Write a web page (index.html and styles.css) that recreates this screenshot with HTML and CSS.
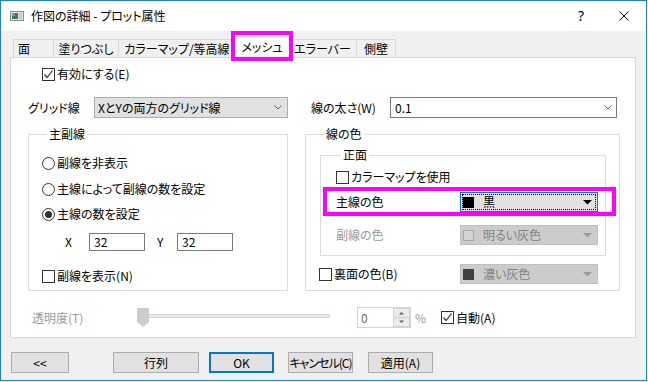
FILE: index.html
```html
<!DOCTYPE html>
<html lang="ja">
<head>
  <meta charset="UTF-8" />
  <meta name="viewport" content="width=device-width, initial-scale=1.0"/>
  <title>作図の詳細 - プロット属性</title>
  <link rel="stylesheet" href="styles.css">
</head>
<body>

<div class="window">
  <div class="titlebar">
    <svg class="app-icon" width="14" height="10" viewBox="0 0 14 10">
      <rect x="0.5" y="0.5" width="13" height="9" fill="#e6e6e6" stroke="#8c8c8c"/>
      <rect x="2" y="2" width="6" height="6" fill="#3b7a68"/>
      <rect x="2" y="2" width="3" height="3" fill="#5f9fb0"/>
      <rect x="9" y="2" width="3" height="6" fill="#c9c9c9"/>
    </svg>
    <span class="title">作図の詳細 - プロット属性</span>
    <span class="help">?</span>
    <svg class="close" width="10" height="10" viewBox="0 0 10 10">
      <path d="M0.5 0.5 L9.5 9.5 M9.5 0.5 L0.5 9.5" stroke="#000" stroke-width="1" fill="none"/>
    </svg>
  </div>

  <div class="dialog">
    <div class="tabs">
      <div class="tab tab-face">面</div>
      <div class="tab tab-fill">塗りつぶし</div>
      <div class="tab tab-cmap">カラーマップ/等高線</div>
      <div class="tab tab-mesh active">メッシュ</div>
      <div class="tab tab-err">エラーバー</div>
      <div class="tab tab-wall">側壁</div>
    </div>

    <div class="panel">
      <div class="opt enable-row">
        <span class="box"><svg width="11" height="11" viewBox="0 0 11 11"><path d="M1.5 5.5 L4 8.5 L9.5 1.5" stroke="#333" stroke-width="1.2" fill="none"/></svg></span>
        有効にする(E)
      </div>

      <div class="cols">
        <div class="field">
          <span class="grid-label">グリッド線</span>
          <div class="combo grid-combo">
            XとYの両方のグリッド線
            <svg width="8" height="5" viewBox="0 0 8 5"><path d="M0.5 0.5 L4 4 L7.5 0.5" stroke="#606060" fill="none"/></svg>
          </div>
        </div>
        <div class="field">
          <span class="width-label">線の太さ(W)</span>
          <div class="combo edit width-combo">
            0.1
            <svg width="8" height="5" viewBox="0 0 8 5"><path d="M0.5 0.5 L4 4 L7.5 0.5" stroke="#606060" fill="none"/></svg>
          </div>
        </div>

        <fieldset class="group major">
          <legend>主副線</legend>
          <div class="opt r1"><span class="radio"></span>副線を非表示</div>
          <div class="opt r2"><span class="radio"></span>主線によって副線の数を設定</div>
          <div class="opt r3"><span class="radio on"></span>主線の数を設定</div>
          <div class="xy">
            <span class="xy-label">X</span>
            <span class="num">32</span>
            <span class="xy-label y">Y</span>
            <span class="num">32</span>
          </div>
          <div class="opt show-minor"><span class="box"></span>副線を表示(N)</div>
        </fieldset>

        <fieldset class="group color">
          <legend>線の色</legend>
          <fieldset class="group front">
            <legend>正面</legend>
            <div class="opt cmap-row"><span class="box"></span>カラーマップを使用</div>
            <div class="line-row main-row">
              <span>主線の色</span>
              <div class="swatch-combo focused">
                <span class="swatch black"></span>黒
                <svg width="9" height="5" viewBox="0 0 9 5"><polygon points="0,0 9,0 4.5,4.5" fill="#000"/></svg>
              </div>
            </div>
            <div class="line-row minor-row">
              <span>副線の色</span>
              <div class="swatch-combo disabled">
                <span class="swatch light"></span>明るい灰色
                <svg width="9" height="5" viewBox="0 0 9 5"><polygon points="0,0 9,0 4.5,4.5" fill="#9a9a9a"/></svg>
              </div>
            </div>
          </fieldset>
          <div class="line-row back-row">
            <div class="opt"><span class="box"></span>裏面の色(B)</div>
            <div class="swatch-combo disabled">
              <span class="swatch dark"></span>濃い灰色
              <svg width="9" height="5" viewBox="0 0 9 5"><polygon points="0,0 9,0 4.5,4.5" fill="#9a9a9a"/></svg>
            </div>
          </div>
        </fieldset>
      </div>

      <div class="alpha-row">
        <span class="alpha-label">透明度(T)</span>
        <svg class="slider" width="193" height="21" viewBox="0 0 193 21">
          <rect x="0.5" y="7.5" width="192" height="3" fill="#e7eaea" stroke="#d6d6d6"/>
          <polygon points="0,1 12,1 12,15 6,20 0,15" fill="#cccccc"/>
        </svg>
        <div class="spin">
          <span class="spin-value">0</span>
          <svg width="17" height="19" viewBox="0 0 17 19">
            <rect x="0.5" y="0.5" width="16" height="8.5" fill="#ececec" stroke="#d4d4d4"/>
            <rect x="0.5" y="10" width="16" height="8.5" fill="#ececec" stroke="#d4d4d4"/>
            <path d="M6 6.5 L11 6.5 L8.5 4 Z" fill="#606060"/>
            <path d="M6 12.5 L11 12.5 L8.5 15 Z" fill="#606060"/>
          </svg>
        </div>
        <span class="percent">%</span>
        <div class="opt auto">
          <span class="box"><svg width="11" height="11" viewBox="0 0 11 11"><path d="M1.5 5.5 L4 8.5 L9.5 1.5" stroke="#333" stroke-width="1.2" fill="none"/></svg></span>
          自動(A)
        </div>
      </div>
    </div>

    <div class="buttons">
      <div class="btn back">&lt;&lt;</div>
      <div class="btn matrix">行列</div>
      <div class="btn ok">OK</div>
      <div class="btn cancel">キャンセル(C)</div>
      <div class="btn apply">適用(A)</div>
    </div>
  </div>
</div>

</body>
</html>
```

FILE: styles.css
```css
* {
  box-sizing: border-box;
}
body {
  margin: 0;
  background: #fff;
  font-family: "Noto Sans CJK JP", "Noto Sans", sans-serif;
  font-size: 12px;
  line-height: 16px;
  color: #000;
  font-feature-settings: "palt";
}
.window {
  width: 647px;
  height: 381px;
  border: 1px solid #1883d7;
  background: #f0f0f0;
}

/* title bar */
.titlebar {
  height: 30px;
  background: #fff;
  display: flex;
  align-items: center;
  padding-left: 9px;
}
.app-icon {
  flex: none;
}
.title {
  margin-left: 7px;
}
.help {
  margin-left: auto;
  margin-right: 35px;
  font-family: "Noto Sans", sans-serif;
  font-size: 14px;
}
.close {
  margin-right: 17px;
}

/* tabs */
.dialog {
  padding: 5px 10px 0 9px;
}
.tabs {
  display: flex;
  align-items: flex-end;
  height: 21px;
  margin-left: 4px;
  position: relative;
  z-index: 1;
}
.tab {
  height: 18px;
  border: 1px solid #d9d9d9;
  border-bottom: none;
  margin-left: -1px;
  background: #f0f0f0;
  text-align: center;
  line-height: 17px;
}
.tab-face { width: 41px; text-align: left; padding-left: 4px; }
.tab-fill { width: 66px; }
.tab-cmap { width: 118px; }
.tab-mesh { width: 58px; }
.tab-err { width: 69px; }
.tab-wall { width: 40px; }
.tab.active {
  position: relative;
  height: 22px;
  margin-left: -3px;
  margin-bottom: -1px;
  background: #fff;
  line-height: 19px;
}
.tab.active + .tab {
  margin-left: -3px;
}
.tab.active::after {
  content: "";
  position: absolute;
  left: -3px;
  right: -3px;
  top: -6px;
  bottom: -3px;
  border: 4px solid #ff00ff;
}

/* panel */
.panel {
  height: 281px;
  background: #fff;
  border: 1px solid #d9d9d9;
  padding: 8px 15px 0 17px;
}
.opt {
  display: flex;
  align-items: center;
  gap: 2px;
  height: 16px;
  white-space: nowrap;
}
.box {
  flex: none;
  width: 13px;
  height: 13px;
  border: 1px solid #333;
  background: #fff;
  display: grid;
  place-items: center;
}
.radio {
  flex: none;
  width: 13px;
  height: 13px;
  border: 1px solid #333;
  border-radius: 50%;
  background: #fff;
  display: grid;
  place-items: center;
}
.radio.on::before {
  content: "";
  width: 7px;
  height: 7px;
  border-radius: 50%;
  background: #333;
}
.enable-row {
  margin-left: 14px;
}

.cols {
  display: grid;
  grid-template-columns: 260px 315px;
  column-gap: 17px;
  row-gap: 8px;
  margin-top: 15px;
}
.field {
  display: flex;
  align-items: center;
  height: 21px;
}
.grid-label {
  width: 67px;
}
.width-label {
  margin-left: 6px;
  width: 79px;
}
.combo {
  flex: none;
  height: 21px;
  border: 1px solid #adadad;
  background: #e1e1e1;
  display: flex;
  align-items: center;
  padding: 0 5px 0 3px;
}
.combo svg {
  margin-left: auto;
}
.grid-combo {
  width: 194px;
}
.width-combo {
  width: 227px;
  background: #fff;
  border-color: #7a7a7a;
  padding: 0 4px 0 4px;
}

/* group boxes */
.group {
  margin: 0;
  padding: 0;
  min-width: 0;
  border: 1px solid #dcdcdc;
}
.group legend {
  padding: 0 2px;
  margin-left: 5px;
  line-height: 16px;
}
.major {
  padding: 0 0 6px 13px;
}
.r1 { margin-top: 13px; }
.r2 { margin-top: 10px; }
.r3 { margin-top: 9px; }
.xy {
  display: flex;
  align-items: center;
  height: 18px;
  margin-top: 11px;
  padding-left: 23px;
}
.xy-label {
  width: 24px;
}
.xy-label.y {
  margin-left: 12px;
  width: 20px;
}
.num {
  width: 56px;
  height: 18px;
  border: 1px solid #7a7a7a;
  padding-left: 4px;
}
.show-minor {
  margin-top: 17px;
}

.color {
  padding: 5px 13px 6px 13px;
}
.front {
  margin-left: 1px;
  padding: 0 0 10px 15px;
}
.cmap-row {
  margin-top: 6px;
}
.line-row {
  display: grid;
  grid-template-columns: 124px 138px;
  align-items: center;
  height: 20px;
}
.main-row {
  position: relative;
  margin-top: 7px;
}
.main-row::after {
  content: "";
  position: absolute;
  left: -13px;
  right: -11px;
  top: -5px;
  bottom: -4px;
  border: 4px solid #ff00ff;
}
.minor-row {
  margin-top: 13px;
  color: #9a9a9a;
}
.back-row {
  margin-top: 8px;
  grid-template-columns: 141px 138px;
}
.swatch-combo {
  height: 20px;
  border: 1px solid #adadad;
  background: #e1e1e1;
  display: flex;
  align-items: center;
  padding: 0 5px 0 2px;
}
.swatch-combo svg {
  margin-left: auto;
}
.swatch-combo.focused {
  border-color: #0078d7;
  outline: 1px dotted #000;
  outline-offset: -3px;
}
.swatch-combo.disabled {
  background: #cccccc;
  border-color: #bfbfbf;
  color: #838383;
}
.swatch {
  width: 11px;
  height: 11px;
  margin-right: 9px;
}
.swatch.black { background: #000; }
.swatch.light { background: #d3d3d3; border: 1px solid #a8a8a8; }
.swatch.dark { background: #404040; }

/* transparency */
.alpha-row {
  display: flex;
  align-items: center;
  height: 21px;
  margin-top: 16px;
}
.alpha-label {
  margin-left: 4px;
  width: 105px;
  color: #9a9a9a;
}
.slider {
  flex: none;
}
.spin {
  display: flex;
  align-items: center;
  margin-left: 27px;
  width: 54px;
  height: 21px;
  border: 1px solid #d4d4d4;
}
.spin-value {
  flex: 1;
  padding-left: 3px;
  color: #6d6d6d;
}
.percent {
  margin-left: 4px;
  color: #9a9a9a;
}
.auto {
  margin-left: 15px;
}

/* bottom buttons */
.buttons {
  display: flex;
  margin-top: 14px;
  padding-left: 1px;
}
.btn {
  flex: none;
  width: 65px;
  height: 21px;
  border: 1px solid #adadad;
  background: #e1e1e1;
  display: flex;
  align-items: center;
  justify-content: center;
  white-space: nowrap;
}
.btn.back { width: 58px; }
.btn.matrix { width: 86px; margin-left: 44px; }
.btn.ok { border: 2px solid #0078d7; margin-left: 10px; }
.btn.cancel { margin-left: 14px; letter-spacing: -1px; }
.btn.apply { margin-left: 15px; }
```
